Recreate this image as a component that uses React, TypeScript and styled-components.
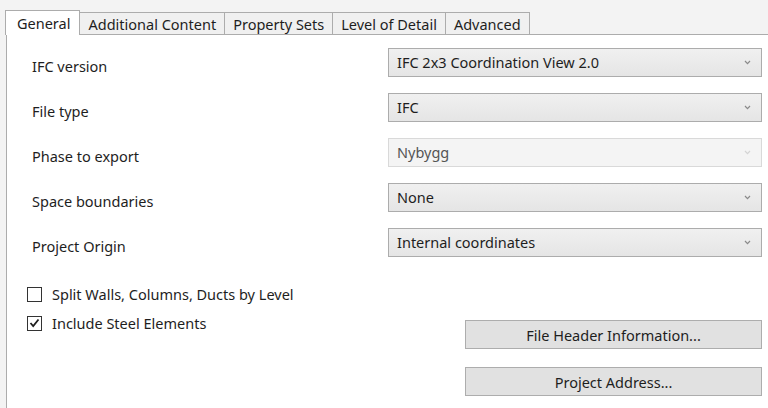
import React from 'react';
import styled, { createGlobalStyle, css } from 'styled-components';

const fontStack = `"Noto Sans", "Open Sans", "Liberation Sans", sans-serif`;

const GlobalStyle = createGlobalStyle`
    html, body {
        margin: 0;
        padding: 0;
        background: #f3f3f3;
        font-family: ${fontStack};
        font-size: 14.5px;
        color: #1e1e1e;
    }
`;

// ---------------- <Window /> ---------------

const Window = styled.div`
    width: 768px;
    height: 408px;
    overflow: hidden;
    padding-top: 10px;
    box-sizing: border-box;
`;

// ---------------- <TabStrip /> ---------------

const TabStrip = styled.div`
    display: flex;
    align-items: flex-end;
    height: 24px;
    padding-left: 5px;
    position: relative;
    z-index: 1;
`;

const Tab = styled.div<{ $active?: boolean }>`
    box-sizing: border-box;
    height: 22px;
    line-height: 20px;
    padding: 0 8px;
    display: flex;
    align-items: center;
    background: #f0f0f0;
    border: 1px solid #acacac;
    border-bottom: none;
    margin-left: -1px;
    color: #1e1e1e;
    white-space: nowrap;

    ${p => p.$active && css`
        height: 25px;
        background: #ffffff;
        margin-bottom: -1px;
        padding: 0 9px 0 11px;
        margin-left: 0;
        z-index: 2;
    `}
`;

// ---------------- <Panel /> ---------------

const Panel = styled.div`
    margin-left: 6px;
    background: #ffffff;
    border-left: 1px solid #acacac;
    border-top: 1px solid #acacac;
    height: 400px;
    padding: 13px 6px 0 0;
`;

// ---------------- <SettingsGrid /> ---------------

const SettingsGrid = styled.div`
    display: grid;
    grid-template-columns: 1fr 374px;
    row-gap: 16px;
`;

const FieldLabel = styled.div`
    padding-left: 25px;
    padding-top: 8px;
    line-height: 20px;
`;

const Combo = styled.div<{ $disabled?: boolean }>`
    box-sizing: border-box;
    height: 29px;
    line-height: 20px;
    display: flex;
    align-items: center;
    justify-content: space-between;
    padding: 0 10px 1px 8px;
    border: 1px solid #acacac;
    background: linear-gradient(#f0f0f0, #e5e5e5);
    color: #1e1e1e;

    ${p => p.$disabled && css`
        border-color: #d9d9d9;
        background: #f4f4f4;
        color: #555555;
    `}
`;

const Chevron = ({ disabled }: { disabled?: boolean }) => (
    <svg width="7" height="5" viewBox="0 0 7 5">
        <path d="M1 1 L3.5 3.6 L6 1" fill="none" stroke={disabled ? '#d4d4d4' : '#8a8a8a'} strokeWidth="1.2" />
    </svg>
);

// ---------------- <BottomArea /> ---------------

const BottomArea = styled.div`
    display: flex;
    justify-content: space-between;
    margin-top: 27px;
`;

const CheckList = styled.div`
    display: flex;
    flex-direction: column;
    gap: 9px;
    padding-left: 20px;
`;

const CheckRow = styled.label`
    display: flex;
    align-items: center;
    gap: 10px;
    line-height: 20px;
`;

const Box = styled.span`
    box-sizing: border-box;
    width: 15px;
    height: 15px;
    border: 1px solid #333333;
    background: #ffffff;
    display: flex;
    align-items: center;
    justify-content: center;
`;

const ButtonColumn = styled.div`
    width: 297px;
    display: flex;
    flex-direction: column;
    gap: 18px;
    padding-top: 36px;
`;

const Button = styled.div`
    box-sizing: border-box;
    height: 29px;
    line-height: 20px;
    display: flex;
    align-items: center;
    justify-content: center;
    border: 1px solid #adadad;
    background: #e1e1e1;
    color: #1e1e1e;
`;

const Checkbox = ({ checked, label }: { checked?: boolean; label: string }) => (
    <CheckRow>
        <Box>
            {checked && (
                <svg width="11" height="10" viewBox="0 0 11 10">
                    <path d="M1.5 5 L4.2 8 L9.5 1.5" fill="none" stroke="#1e1e1e" strokeWidth="1.8" />
                </svg>
            )}
        </Box>
        {label}
    </CheckRow>
);

const fields: { label: string; value: string; disabled?: boolean }[] = [
    { label: 'IFC version', value: 'IFC 2x3 Coordination View 2.0' },
    { label: 'File type', value: 'IFC' },
    { label: 'Phase to export', value: 'Nybygg', disabled: true },
    { label: 'Space boundaries', value: 'None' },
    { label: 'Project Origin', value: 'Internal coordinates' },
];

const tabs = ['General', 'Additional Content', 'Property Sets', 'Level of Detail', 'Advanced'];

export default function App() {
    return (
        <>
            <GlobalStyle />
            <Window>
                <TabStrip>
                    {tabs.map((t, i) => (
                        <Tab key={t} $active={i === 0}>{t}</Tab>
                    ))}
                </TabStrip>
                <Panel>
                    <SettingsGrid>
                        {fields.map(f => (
                            <React.Fragment key={f.label}>
                                <FieldLabel>{f.label}</FieldLabel>
                                <Combo $disabled={f.disabled}>
                                    {f.value}
                                    <Chevron disabled={f.disabled} />
                                </Combo>
                            </React.Fragment>
                        ))}
                    </SettingsGrid>
                    <BottomArea>
                        <CheckList>
                            <Checkbox label="Split Walls, Columns, Ducts by Level" />
                            <Checkbox checked label="Include Steel Elements" />
                        </CheckList>
                        <ButtonColumn>
                            <Button>File Header Information...</Button>
                            <Button>Project Address...</Button>
                        </ButtonColumn>
                    </BottomArea>
                </Panel>
            </Window>
        </>
    );
}
